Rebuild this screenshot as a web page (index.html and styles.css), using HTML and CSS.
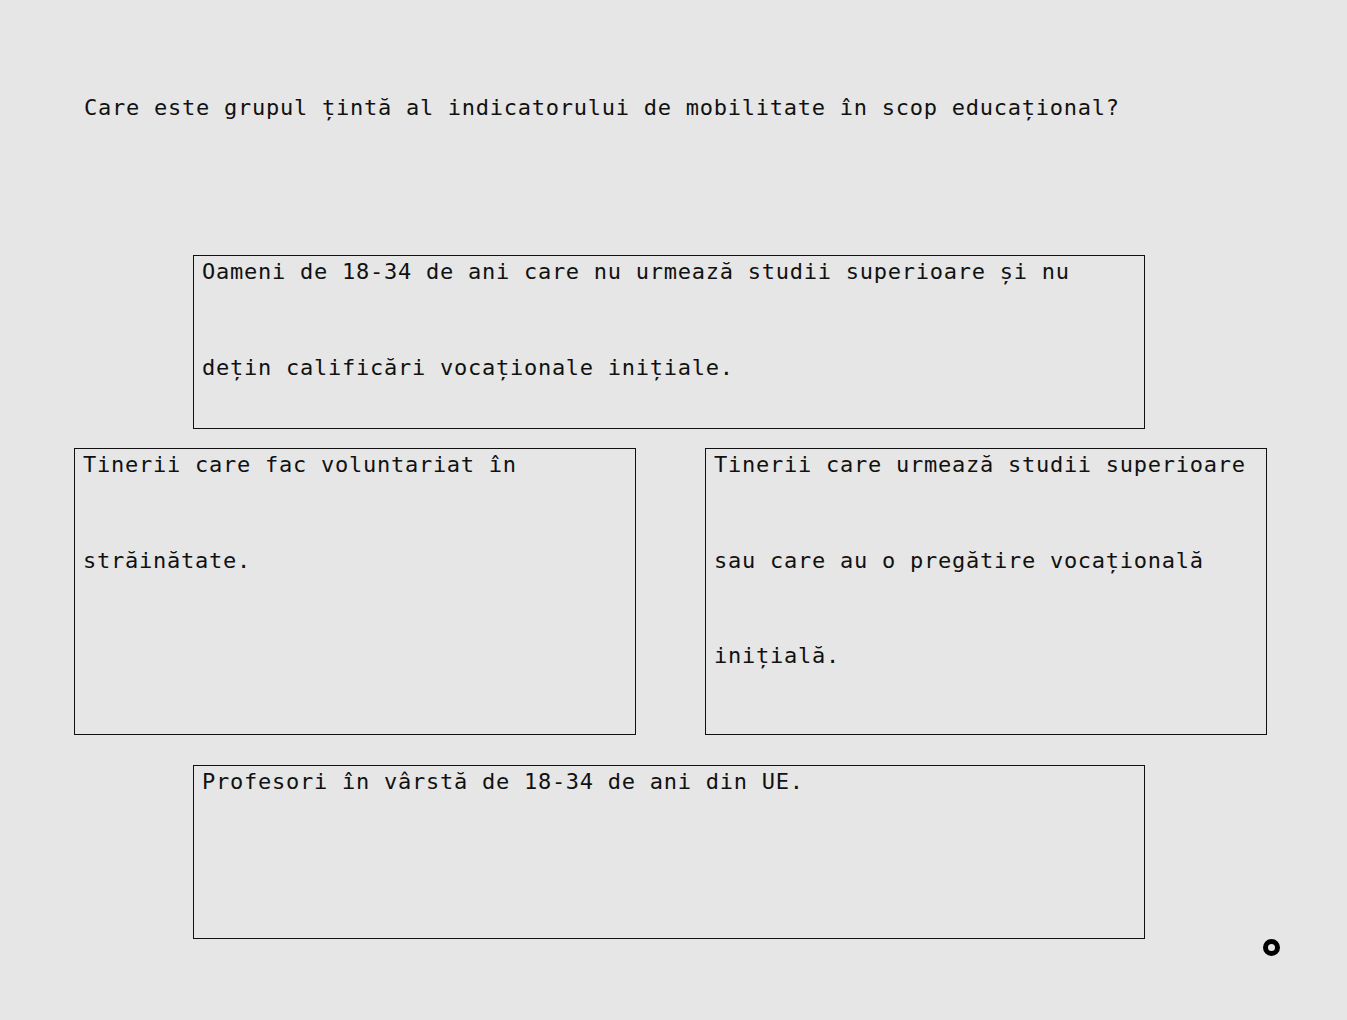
FILE: index.html
```html
<!DOCTYPE html>
<html lang="ro">
<head>
<meta charset="utf-8">
<title>Quiz</title>
<link rel="stylesheet" href="styles.css">
</head>
<body>
<main class="page">
  <h1 class="question">Care este grupul țintă al indicatorului de mobilitate în scop educațional?</h1>
  <div class="options">
    <div class="row row-single row-first">
      <div class="option option-wide"><p class="opt-text">Oameni de 18-34 de ani care nu urmează studii superioare și nu dețin calificări vocaționale inițiale.</p></div>
    </div>
    <div class="row row-pair">
      <div class="option option-half"><p class="opt-text">Tinerii care fac voluntariat în străinătate.</p></div>
      <div class="option option-half"><p class="opt-text">Tinerii care urmează studii superioare sau care au o pregătire vocațională inițială.</p></div>
    </div>
    <div class="row row-single row-last">
      <div class="option option-wide"><p class="opt-text">Profesori în vârstă de 18-34 de ani din UE.</p></div>
    </div>
  </div>
  <span class="cursor-dot"></span>
</main>
</body>
</html>
```

FILE: styles.css
```css
html, body {
  margin: 0;
  padding: 0;
  background: #e6e6e6;
}

.page {
  position: relative;
  width: 1347px;
  height: 1020px;
  font-family: "DejaVu Sans Mono", "Liberation Mono", monospace;
  font-size: 22px;
  letter-spacing: 0.75px;
  color: #111;
}

.question {
  margin: 0;
  padding: 94px 0 0 84px;
  font-size: 22px;
  font-weight: normal;
  line-height: 28px;
}

.options {
  margin: 133px 0 0 74px;
  width: 1193px;
  display: flex;
  flex-direction: column;
}

.row-single {
  padding-left: 119px;
}

.row-pair {
  display: flex;
  gap: 69px;
  margin-top: 19px;
}

.row-last {
  margin-top: 30px;
}

.option {
  box-sizing: border-box;
  border: 1px solid #111;
  padding: 0 8px;
  overflow: hidden;
}

.option-wide {
  width: 952px;
  height: 174px;
}

.option-half {
  width: 562px;
  height: 287px;
}

.opt-text {
  margin: -32px 0 0 0;
  line-height: 95.6px;
}

.cursor-dot {
  position: absolute;
  left: 1263px;
  top: 939px;
  width: 7px;
  height: 7px;
  border: 5px solid #000;
  border-radius: 50%;
}
```
